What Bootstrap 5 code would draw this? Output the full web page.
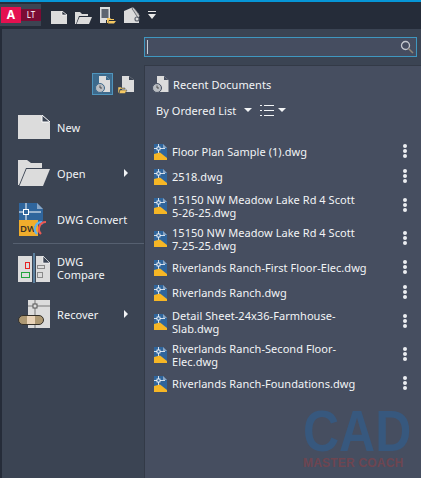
<!DOCTYPE html>
<html lang="en">
<head>
    <meta charset="UTF-8">
    <meta name="viewport" content="width=device-width, initial-scale=1.0">
    <title>Start Menu</title>
    <link href="https://cdn.jsdelivr.net/npm/bootstrap@5.3.0/dist/css/bootstrap.min.css" rel="stylesheet">
    <style>
        html, body { height: 100%; }
        body {
            background-color: #3b4453;
            color: #f2f4f6;
            font-family: "Noto Sans", "Open Sans", sans-serif;
            font-size: 11px;
            line-height: 13px;
            letter-spacing: .05px;
            overflow: hidden;
        }
        svg { display: block; flex: none; }
        .app-page { width: 421px; height: 478px; position: relative; }
        .title-bar { height: 29px; background: #252c39; border-top: 2px solid #0696d7; }
        .logo-box { width: 41px; height: 22px; margin-top: 2px; background: #3c4452; padding-top: 3px; }
        .logo-a { width: 20px; height: 16px; margin-left: 1px; background: #e51050; color: #fff; font-weight: 700; font-size: 12px; line-height: 15px; text-align: center; }
        .logo-lt { width: 20px; height: 12px; margin-top: 2px; background: #7a0c34; color: #fff; font-size: 8px; line-height: 12px; text-align: center; }
        .quick-icons { gap: 8px; padding-left: 10px; padding-top: 5px; }
        .main-area { height: 449px; border-left: 2px solid #252c39; }
        .left-col { width: 142px; }
        .view-toggle { height: 22px; margin-top: 44px; padding-left: 90px; gap: 3px; }
        .view-btn { width: 21px; height: 22px; padding: 1px 0 0 1px; border: 1px solid transparent; }
        .view-on { background: #3d6a8c; border-color: #4f95bd; }
        .cmd-item { padding-left: 16px; gap: 7px; position: relative; }
        .cmd-new { height: 40px; margin-top: 12px; }
        .cmd-open { height: 30px; margin-top: 11px; }
        .cmd-convert { height: 33px; margin-top: 15px; }
        .cmd-compare { height: 30px; margin-top: 9px; }
        .cmd-recover { height: 30px; margin-top: 16px; }
        .cmd-sep { border-top: 1px solid #566070; margin: 7px 0 0 11px; width: 131px; }
        .cmd-arrow { position: absolute; left: 122px; top: 50%; margin-top: -4px; border-left: 4px solid #f2f4f6; border-top: 4px solid transparent; border-bottom: 4px solid transparent; }
        .right-col { width: 277px; }
        .search-row { height: 36px; padding-top: 8px; }
        .search-box { width: 273px; height: 20px; background: #454d60; border: 1px solid #3f97c0; position: relative; }
        .search-caret { position: absolute; left: 2px; top: 2px; width: 1px; height: 14px; background: #c9ced6; }
        .search-icon { position: absolute; right: 2px; top: 2px; }
        .panel { flex: 1; background: #464e60; border-top: 1px solid #333a47; border-left: 1px solid #333a47; }
        .panel-head { height: 24px; margin-top: 6px; padding-left: 7px; gap: 4px; }
        .sort-row { height: 18px; margin-top: 5px; padding-left: 11px; }
        .caret-down { display: inline-block; border-top: 4px solid #f2f4f6; border-left: 4px solid transparent; border-right: 4px solid transparent; }
        .doc-list { margin-top: 20px; position: relative; z-index: 1; }
        .doc-row { min-height: 25px; padding: 3.5px 0 3.5px 9px; gap: 5px; }
        .doc-name { width: 230px; }
        .doc-menu { margin-left: auto; margin-right: 14px; }
        .doc-dot { width: 4px; height: 4px; margin-bottom: 1px; border-radius: 50%; background: #eceef1; }
        .mark-wrap { position: absolute; left: 303px; top: 407px; width: 108px; }
        .mark-cad { color: #37587e; font-family: "Liberation Sans", sans-serif; font-weight: 700; font-size: 58px; line-height: 48px; transform: scaleX(.86); transform-origin: left center; white-space: nowrap; }
        .mark-coach { color: #6e4550; font-family: "Liberation Sans", sans-serif; font-weight: 700; font-size: 12px; line-height: 13px; letter-spacing: .2px; white-space: nowrap; margin-top: 2px; }
    </style>
</head>
<body>
<svg width="0" height="0" style="position:absolute">
    <defs>
        <symbol id="dwg" viewBox="0 0 13 16">
            <path d="M0 0H9L13 4V16H0Z" fill="#2f659c"/>
            <path d="M9 0L13 4H9Z" fill="#8aa6c4"/>
            <path d="M0 10L6 8.500L13 14V16H0Z" fill="#f6b625"/>
            <path d="M0 4.500H11M4.500 0V9" stroke="#fff" stroke-width=".8"/>
            <rect x="3" y="3" width="3" height="3" fill="#2f659c" stroke="#fff" stroke-width=".8"/>
        </symbol>
    </defs>
</svg>
<div class="app-page">
    <div class="title-bar d-flex">
        <div class="logo-box d-flex">
            <div class="logo-a">A</div>
            <div class="logo-lt">LT</div>
        </div>
        <div class="quick-icons d-flex">
            <svg width="16" height="13" viewBox="0 0 16 13" class="mt-1"><path d="M0 0H11L16 4V13H0Z" fill="#dcdcdc"/><path d="M11 0V4H16Z" fill="#252c39" stroke="#fff" stroke-width=".7"/></svg>
            <svg width="17" height="14" viewBox="0 0 17 14" class="mt-1"><path d="M0 13V1H5L7 3H13V5H4L1 13Z" fill="#dcdcdc"/><path d="M4.500 6H17L14 13H1.500Z" fill="#dcdcdc"/></svg>
            <svg width="16" height="17" viewBox="0 0 16 17"><path d="M0 0H10V13H6V16H0Z" fill="#dcdcdc"/><path d="M1.500 2H8.500V11H1.500Z" fill="#5f6570"/><path d="M7 16V11H10L11 12H14V13H9L8 16ZM9 14H16L14 16.500H8Z" fill="#f5c862"/></svg>
            <svg width="16" height="16" viewBox="0 0 16 16"><path d="M0 4L7 1L9 0L15 7V16H0Z" fill="#dcdcdc"/><path d="M9 0C12 3 14 6 16 9L14 11C12 8 10 4 8 2Z" fill="#c9c9c9" stroke="#252c39" stroke-width=".6"/><circle cx="13" cy="12" r="2" fill="none" stroke="#5f6570" stroke-width="1.200"/></svg>
            <svg width="8" height="9" viewBox="0 0 8 9" class="mt-1"><path d="M0 0H8V1H0ZM0 3H8L4 8Z" fill="#e8e8e8"/></svg>
        </div>
    </div>
    <div class="main-area d-flex">
        <div class="left-col">
            <div class="view-toggle d-flex">
                <div class="view-btn view-on">
                    <svg width="17" height="18" viewBox="0 0 17 18"><path d="M5 1H12L16 5V17H5Z" fill="#dcdcdc"/><path d="M12 1V5H16Z" fill="#3d6a8c"/><circle cx="6" cy="13" r="4.500" fill="#b9bdc2" stroke="#3d6a8c"/><path d="M6 10.500V13H8" fill="none" stroke="#333" stroke-width=".8"/></svg>
                </div>
                <div class="view-btn">
                    <svg width="17" height="19" viewBox="0 0 17 19"><path d="M4 1H11L16 5V17H4Z" fill="#dcdcdc"/><path d="M11 1V5H16Z" fill="#3b4453"/><path d="M0 18V12H3L4 13H7V14H2L1 18ZM2 15H9L7 18.500H1Z" fill="#f5c862" stroke="#3b4453" stroke-width=".5"/></svg>
                </div>
            </div>
            <div class="cmd-item cmd-new d-flex align-items-center">
                <svg width="32" height="24" viewBox="0 0 32 24"><path d="M0 0H23L32 8V24H0Z" fill="#dcdcdc"/><path d="M24 0V7H32Z" fill="#3b4453" stroke="#fff" stroke-width="1"/></svg>
                <span>New</span>
            </div>
            <div class="cmd-item cmd-open d-flex align-items-center">
                <svg width="32" height="26" viewBox="0 0 32 26"><path d="M0 25V0H9L13 3H24V8H8L1 25Z" fill="#dcdcdc"/><path d="M8.500 9H32L25 26H1.500Z" fill="#dcdcdc"/></svg>
                <span>Open</span>
                <i class="cmd-arrow"></i>
            </div>
            <div class="cmd-item cmd-convert d-flex align-items-center">
                <svg width="32" height="33" viewBox="0 0 32 33"><path d="M1 0H19L25 6V22H1Z" fill="#2f659c"/><path d="M19 0L25 6H19Z" fill="#8aa6c4"/><path d="M1 9H23M8 0V17" stroke="#fff"/><rect x="5.500" y="6.500" width="5" height="5" fill="#2f659c" stroke="#fff"/><rect x="1" y="17" width="19" height="16" fill="#f0ad2c"/><text x="2" y="29" font-size="9.500" font-weight="600" fill="#3a3226" font-family="Noto Sans, sans-serif">DW</text><path d="M19 31A7 7 0 0 1 24 19" fill="none" stroke="#5fb1ee" stroke-width="2.200"/><path d="M24 31A7 7 0 0 0 29 19" fill="none" stroke="#ec5a55" stroke-width="2.200" transform="rotate(180 26 25)"/></svg>
                <span>DWG Convert</span>
            </div>
            <div class="cmd-sep"></div>
            <div class="cmd-item cmd-compare d-flex align-items-center">
                <svg width="32" height="30" viewBox="0 0 32 30"><path d="M0 3H14V29H0Z" fill="#dcdcdc"/><path d="M18 3H25L32 10V29H18Z" fill="#dcdcdc"/><path d="M25 3V10H32Z" fill="#3b4453" stroke="#fff" stroke-width=".6"/><path d="M16 0V30" stroke="#7dbbe9" stroke-width="1"/><rect x="7.500" y="9.500" width="4" height="6" fill="none" stroke="#e52222"/><rect x="3.500" y="19.500" width="8" height="5" fill="none" stroke="#22a33c"/><rect x="19.500" y="12.500" width="7" height="3" fill="none" stroke="#8a8a8a"/><rect x="19.500" y="19.500" width="5" height="5" fill="none" stroke="#8a8a8a"/></svg>
                <span>DWG<br>Compare</span>
            </div>
            <div class="cmd-item cmd-recover d-flex align-items-center">
                <svg width="32" height="28" viewBox="0 0 32 28"><path d="M10 0H32V28H10Z" fill="#dcdcdc"/><path d="M10 6H32M17 0V28" stroke="#777"/><rect x="15" y="4" width="4" height="4" fill="#dcdcdc" stroke="#555"/><rect x="0.500" y="15.500" width="25" height="9" rx="4.500" fill="#ad9873" stroke="#33302a"/><rect x="9" y="16" width="8" height="8" fill="#e9d3b8"/></svg>
                <span>Recover</span>
                <i class="cmd-arrow"></i>
            </div>
        </div>
        <div class="right-col d-flex flex-column">
            <div class="search-row">
                <div class="search-box">
                    <div class="search-caret"></div>
                    <svg class="search-icon" width="14" height="14" viewBox="0 0 14 14"><circle cx="5.500" cy="5.500" r="4" fill="none" stroke="#c4c8ce" stroke-width="1.300"/><path d="M8.500 8.500L13 13" stroke="#8f8778" stroke-width="1.500"/></svg>
                </div>
            </div>
            <div class="panel">
                <div class="panel-head d-flex align-items-center">
                    <svg width="17" height="17" viewBox="0 0 17 17"><path d="M5 0H12L16.500 4V16H5Z" fill="#dcdcdc"/><path d="M12 0V4H16.500Z" fill="#464e60"/><circle cx="5" cy="12" r="4.500" fill="#b9bdc2" stroke="#464e60"/><path d="M5 9.500V12H7" fill="none" stroke="#333" stroke-width=".8"/></svg>
                    <span>Recent Documents</span>
                </div>
                <div class="sort-row d-flex align-items-center">
                    <span>By Ordered List</span>
                    <i class="caret-down ms-2"></i>
                    <svg width="14" height="11" viewBox="0 0 14 11" class="ms-2"><path d="M0 .5H2M4 .5H14M0 5.500H2M4 5.500H14M0 10.500H2M4 10.500H14" stroke="#f2f4f6"/></svg>
                    <i class="caret-down ms-1"></i>
                </div>
                <div class="doc-list" id="docs"></div>
            </div>
        </div>
    </div>
    <div class="mark-wrap">
        <div class="mark-cad">CAD</div>
        <div class="mark-coach">MASTER COACH</div>
    </div>
</div>
<script>
    const docs = [
        'Floor Plan Sample (1).dwg',
        '2518.dwg',
        '15150 NW Meadow Lake Rd 4 Scott<br>5-26-25.dwg',
        '15150 NW Meadow Lake Rd 4 Scott<br>7-25-25.dwg',
        'Riverlands Ranch-First Floor-Elec.dwg',
        'Riverlands Ranch.dwg',
        'Detail Sheet-24x36-Farmhouse-<br>Slab.dwg',
        'Riverlands Ranch-Second Floor-<br>Elec.dwg',
        'Riverlands Ranch-Foundations.dwg'
    ];
    document.getElementById('docs').innerHTML = docs.map(name => `
        <div class="doc-row d-flex align-items-center">
            <svg width="13" height="16"><use href="#dwg"/></svg>
            <div class="doc-name">${name}</div>
            <div class="doc-menu"><div class="doc-dot"></div><div class="doc-dot"></div><div class="doc-dot"></div></div>
        </div>`).join('');
</script>
</body>
</html>
